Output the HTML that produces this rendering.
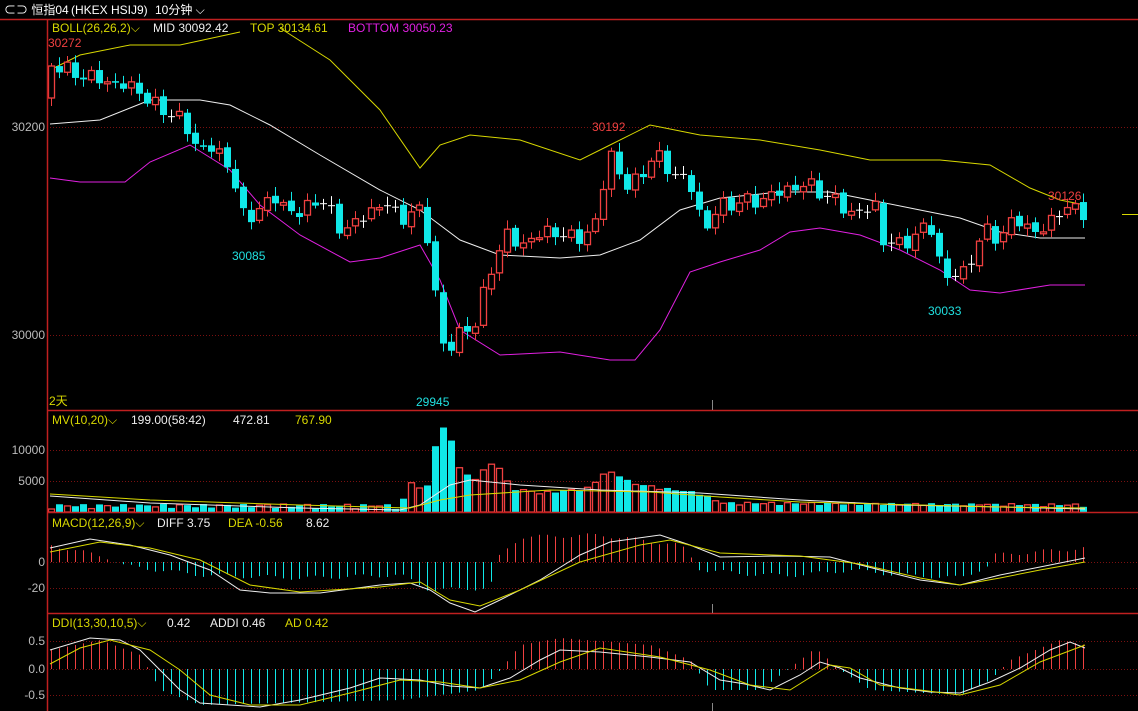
<!DOCTYPE html>
<html><head><meta charset="utf-8"><style>
html,body{margin:0;padding:0;background:#000;width:1138px;height:711px;overflow:hidden}
svg{display:block}
text{font-family:"Liberation Sans","Noto Sans CJK SC",sans-serif;font-size:12px}
</style></head><body>
<svg id="s" width="1138" height="711" xmlns="http://www.w3.org/2000/svg">
<rect width="1138" height="711" fill="#000"/>
<g stroke="#7a1010" stroke-dasharray="1,2" stroke-width="1">
<line x1="47" y1="127.5" x2="1138" y2="127.5"/><line x1="47" y1="335.5" x2="1138" y2="335.5"/>
<line x1="47" y1="450.5" x2="1138" y2="450.5"/><line x1="47" y1="481.5" x2="1138" y2="481.5"/>
<line x1="47" y1="562.5" x2="1138" y2="562.5"/><line x1="47" y1="588.5" x2="1138" y2="588.5"/>
<line x1="47" y1="641.5" x2="1138" y2="641.5"/><line x1="47" y1="669.5" x2="1138" y2="669.5"/><line x1="47" y1="695.5" x2="1138" y2="695.5"/>
</g>
<g id="d"></g>
<g stroke="#c02020" stroke-width="1.5">
<line x1="0" y1="19.5" x2="1138" y2="19.5"/>
<line x1="47.5" y1="19" x2="47.5" y2="711"/>
<line x1="47" y1="410.5" x2="1138" y2="410.5"/>
<line x1="47" y1="512.5" x2="1138" y2="512.5"/>
<line x1="47" y1="613.5" x2="1138" y2="613.5"/>
</g>
<g stroke="#888"><line x1="712.5" y1="400" x2="712.5" y2="410"/><line x1="712.5" y1="604" x2="712.5" y2="613"/><line x1="712.5" y1="703" x2="712.5" y2="711"/></g>
<g fill="#bbb" text-anchor="end">
<text x="45" y="131">30200</text><text x="45" y="339">30000</text>
<text x="45" y="454">10000</text><text x="45" y="485">5000</text>
<text x="45" y="566">0</text><text x="45" y="592">-20</text>
<text x="45" y="645">0.5</text><text x="45" y="673">0.0</text><text x="45" y="699">-0.5</text>
</g>
<g fill="#fff"><text x="4" y="14" font-size="13">⊂⊃ 恒指04</text><text x="71" y="14" font-family="Liberation Mono" font-size="12">(HKEX HSIJ9)</text><text x="155" y="14" font-size="13">10分钟 ⌵</text></g>
<text x="52" y="32" fill="#d8d800">BOLL(26,26,2)⌵</text><text x="153" y="32" fill="#eee">MID 30092.42</text>
<text x="250" y="32" fill="#d8d800">TOP 30134.61</text><text x="348" y="32" fill="#e020e0">BOTTOM 30050.23</text>
<text x="48" y="47" fill="#f04040">30272</text><text x="232" y="260" fill="#20e0e0">30085</text>
<text x="416" y="406" fill="#20e0e0">29945</text><text x="592" y="131" fill="#f04040">30192</text>
<text x="928" y="315" fill="#20e0e0">30033</text><text x="1048" y="200" fill="#f04040">30126</text>
<text x="49" y="405" fill="#d8d800">2天</text>
<text x="52" y="424" fill="#d8d800">MV(10,20)⌵</text><text x="131" y="424" fill="#eee">199.00(58:42)</text><text x="233" y="424" fill="#eee">472.81</text><text x="295" y="424" fill="#d8d800">767.90</text>
<text x="52" y="527" fill="#d8d800">MACD(12,26,9)⌵</text><text x="157" y="527" fill="#eee">DIFF 3.75</text><text x="228" y="527" fill="#d8d800">DEA -0.56</text><text x="306" y="527" fill="#eee">8.62</text>
<text x="52" y="627" fill="#d8d800">DDI(13,30,10,5)⌵</text><text x="167" y="627" fill="#eee">0.42</text><text x="210" y="627" fill="#eee">ADDI 0.46</text><text x="285" y="627" fill="#d8d800">AD 0.42</text>
<line x1="1122" y1="214.5" x2="1138" y2="214.5" stroke="#d8d800"/>
</svg>
<script>
var g=document.getElementById('d'),h='';
function I(p,x){if(x<=p[0][0])return p[0][1];for(var i=1;i<p.length;i++){if(x<=p[i][0]){var a=p[i-1],b=p[i];return a[1]+(b[1]-a[1])*(x-a[0])/(b[0]-a[0]);}}return p[p.length-1][1];}
function PL(p,c){return '<polyline fill="none" stroke="'+c+'" stroke-width="1" points="'+p.map(function(q){return q.join(',')}).join(' ')+'"/>';}
var R='#f04040',C='#10e8e8';
var top1=[[50,70],[80,55],[130,45],[180,45],[240,32]],top2=[[280,28],[330,60],[380,110],[420,168],[440,145],[470,135],[520,140],[580,160],[610,145],[650,125],[700,135],[760,140],[820,150],[870,160],[940,160],[990,165],[1030,188],[1060,200],[1085,205]];
var mid=[[50,124],[100,120],[130,108],[150,100],[200,100],[230,105],[270,125],[320,155],[380,190],[420,210],[460,240],[500,255],[560,258],[600,255],[640,240],[680,210],[720,198],[780,192],[830,192],[870,200],[920,210],[960,218],[1000,232],[1040,238],[1085,238]];
var bot=[[50,178],[80,182],[125,182],[150,162],[190,145],[230,170],[260,205],[300,235],[350,262],[380,258],[420,245],[440,280],[460,330],[500,355],[560,352],[610,360],[635,360],[660,330],[690,272],[720,262],[760,250],[790,232],[820,228],[860,235],[900,250],[940,270],[970,290],[1000,293],[1050,285],[1085,285]];
h+=PL(top1,'#d8d800')+PL(top2,'#d8d800')+PL(mid,'#eee')+PL(bot,'#e020e0');
var cp=[[44,98],[52,66],[70,72],[100,80],[140,90],[150,104],[180,118],[195,145],[210,148],[230,165],[245,225],[260,205],[275,200],[300,215],[320,195],[340,230],[360,220],[385,200],[400,222],[415,205],[425,225],[435,290],[445,360],[460,330],[475,325],[490,270],[505,235],[520,245],[550,230],[575,240],[595,225],[610,150],[625,190],[640,175],[655,155],[670,170],[690,185],[705,230],[720,205],[760,200],[790,188],[810,185],[830,198],[855,215],[875,205],[880,240],[900,245],[915,235],[930,225],[945,280],[965,270],[985,230],[1000,238],[1015,218],[1040,235],[1060,208],[1085,212]];
var vs=[[400,509],[410,484],[426,494],[434,449],[442,429],[450,439],[458,468],[466,477],[474,481],[490,466],[500,470],[510,490],[540,495],[560,493],[590,490],[600,477],[615,474],[630,485],[660,490],[700,495],[720,505],[1085,507]];
var macdW=[[50,548],[90,539],[130,545],[170,555],[210,570],[240,590],[270,593],[320,593],[380,585],[410,583],[430,590],[450,603],[475,612],[500,600],[540,580],[580,555],[610,542],[660,535],[690,545],[720,557],[780,556],[830,557],[880,570],[920,580],[960,585],[1000,575],[1040,567],[1085,558]];
var macdY=[[50,552],[100,542],[150,548],[200,560],[250,585],[300,592],[380,587],[420,582],[450,600],[480,606],[520,590],[580,562],[640,545],[670,540],[720,553],[800,556],[860,564],[920,578],[960,585],[1000,578],[1040,570],[1085,562]];
var mH=[[50,545],[110,558],[118,563],[125,566],[200,575],[300,578],[400,575],[430,590],[490,588],[495,564],[500,555],[520,537],[600,535],[680,545],[695,562],[700,570],[760,575],[800,575],[850,570],[900,575],[960,578],[990,565],[995,555],[1085,548]];
var ddH=[[50,650],[100,640],[140,655],[160,690],[200,705],[400,700],[480,690],[500,670],[520,645],[560,638],[650,645],[690,660],[710,690],[760,690],[800,660],[815,648],[840,670],[870,690],[960,695],[990,680],[1010,660],[1060,640],[1085,645]];
var prev=98;
for(var i=0;i<130;i++){var x=51+8*i;if(x>1086)break;
 var c=I(cp,x)+Math.sin(i*2.3)*6+Math.cos(i*1.7)*3;if(i==0)c=66;
 var o=prev+Math.sin(i*3.1)*2;if(i==0)o=98;
 var t=Math.min(o,c),b=Math.max(o,c),hh=Math.max(b-t,1);
 var col=c<o?R:C;if(Math.abs(c-o)<1.5)col='#fff';
 var wt=t-3-Math.abs(Math.sin(i*1.3))*6,wb=b+2+Math.abs(Math.cos(i*0.9))*6;
 h+='<line x1="'+(x+.5)+'" y1="'+wt+'" x2="'+(x+.5)+'" y2="'+wb+'" stroke="'+col+'"/>';
 if(col==R)h+='<rect x="'+(x-2.5)+'" y="'+t+'" width="6" height="'+hh+'" fill="#000" stroke="'+R+'" stroke-width="1.3"/>';
 else h+='<rect x="'+(x-3)+'" y="'+t+'" width="7" height="'+hh+'" fill="'+col+'"/>';
 prev=c;
 var vt=I(vs,x)-(x<400?Math.abs(Math.sin(i*1.9))*5:Math.abs(Math.sin(i*1.9))*3);
 if(col==R)h+='<rect x="'+(x-2.5)+'" y="'+vt+'" width="6" height="'+(512-vt)+'" fill="none" stroke="'+R+'" stroke-width="1.3"/>';
 else h+='<rect x="'+(x-3)+'" y="'+vt+'" width="7" height="'+(512-vt)+'" fill="'+C+'"/>';
 var mh=I(mH,x)+Math.sin(i*1.1)*2;
 h+='<line x1="'+(x+.5)+'" y1="562" x2="'+(x+.5)+'" y2="'+mh+'" stroke="'+(mh<562?R:C)+'"/>';
 var dh=I(ddH,x);
 h+='<line x1="'+(x+.5)+'" y1="669" x2="'+(x+.5)+'" y2="'+dh+'" stroke="'+(dh<669?R:C)+'"/>';
}
h+=PL([[50,496],[150,503],[300,508],[400,510],[420,505],[450,485],[470,480],[520,485],[600,490],[700,493],[800,500],[900,505],[1000,507],[1085,509]],'#eee');
h+=PL([[50,494],[150,500],[300,505],[410,508],[440,500],[470,495],[550,490],[650,492],[720,497],[800,502],[1000,507],[1085,508]],'#d8d800');
h+=PL(macdW,'#eee')+PL(macdY,'#d8d800');
h+=PL([[50,650],[90,638],[120,640],[140,650],[160,670],[180,690],[200,703],[230,705],[260,707],[300,700],[350,688],[380,678],[420,680],[450,686],[480,688],[510,678],[540,660],[560,650],[600,652],[650,657],[690,662],[720,680],[745,684],[770,690],[800,675],[820,662],[840,668],[860,678],[900,688],[930,692],[960,693],[990,682],[1020,668],[1050,650],[1070,642],[1085,648]],'#eee');
h+=PL([[50,664],[80,648],[110,640],[150,650],[180,670],[210,695],[250,705],[300,705],[350,693],[400,680],[440,682],[480,688],[520,680],[560,662],[600,648],[660,657],[710,670],[750,685],[790,690],[830,665],[850,668],[880,685],[920,690],[960,695],[1000,685],[1040,662],[1085,645]],'#d8d800');
g.innerHTML=h;
</script>
</body></html>
